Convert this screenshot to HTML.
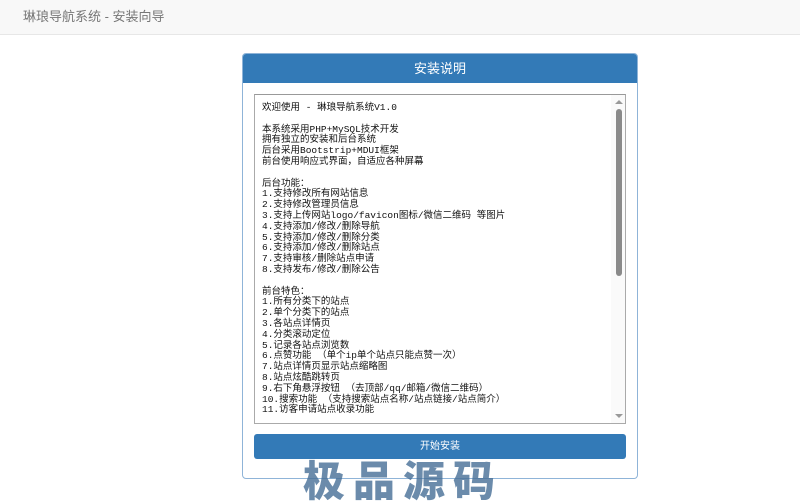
<!DOCTYPE html>
<html><head><meta charset="utf-8"><style>
html,body{margin:0;padding:0;width:800px;height:504px;overflow:hidden;background:#fff;font-family:"Liberation Sans","Noto Sans CJK SC",sans-serif;position:relative}
.nav{position:absolute;left:0;top:0;width:800px;height:34px;background:#f8f8f8;border-bottom:1px solid #e7e7e7}
.nav span{position:absolute;left:23px;top:8px;font-size:13px;color:#777;line-height:18px}
.panel{position:absolute;left:242px;top:53px;width:394px;height:424px;border:1px solid #8fb4d8;border-radius:4px;background:#fff}
.ph{height:29px;background:#337ab7;color:#fff;text-align:center;font-size:13px;line-height:29px;border-radius:3px 3px 0 0}
.ta{position:absolute;left:11px;top:40px;width:370px;height:328px;border:1px solid #aaa;border-top-color:#999;overflow:hidden;background:#fff}
.ta pre{margin:0;position:absolute;left:7px;top:8px;font-family:"Liberation Mono","Noto Sans CJK SC",monospace;font-size:9.5px;line-height:10.8px;color:#111;white-space:pre}
.ta pre div{height:10.8px;line-height:10.8px}
.sb{position:absolute;right:0;top:0;width:14px;height:100%;background:#fafafa}
.thumb{position:absolute;left:5px;top:14px;width:6px;height:167px;background:#8a8a8a;border-radius:3px}
.up{position:absolute;left:4px;top:5px;width:0;height:0;border-left:4px solid transparent;border-right:4px solid transparent;border-bottom:4px solid #999}
.dn{position:absolute;left:4px;bottom:5px;width:0;height:0;border-left:4px solid transparent;border-right:4px solid transparent;border-top:4px solid #999}
.btn{position:absolute;left:11px;top:380px;width:372px;height:25px;background:#337ab7;border-radius:3px;color:#fff;text-align:center;font-size:10px;line-height:25px}
.wm{position:absolute;left:303px;top:456px;font-size:42px;font-weight:900;color:rgba(70,110,150,0.8);letter-spacing:8px;font-family:"Noto Sans CJK SC",sans-serif;line-height:46px}
</style></head><body>
<div class="nav"><span>琳琅导航系统 - 安装向导</span></div>
<div class="panel">
<div class="ph">安装说明</div>
<div class="ta"><pre><div>欢迎使用 - 琳琅导航系统V1.0</div><div></div><div>本系统采用PHP+MySQL技术开发</div><div>拥有独立的安装和后台系统</div><div>后台采用Bootstrip+MDUI框架</div><div>前台使用响应式界面，自适应各种屏幕</div><div></div><div>后台功能：</div><div>1.支持修改所有网站信息</div><div>2.支持修改管理员信息</div><div>3.支持上传网站logo/favicon图标/微信二维码 等图片</div><div>4.支持添加/修改/删除导航</div><div>5.支持添加/修改/删除分类</div><div>6.支持添加/修改/删除站点</div><div>7.支持审核/删除站点申请</div><div>8.支持发布/修改/删除公告</div><div></div><div>前台特色：</div><div>1.所有分类下的站点</div><div>2.单个分类下的站点</div><div>3.各站点详情页</div><div>4.分类滚动定位</div><div>5.记录各站点浏览数</div><div>6.点赞功能 （单个ip单个站点只能点赞一次）</div><div>7.站点详情页显示站点缩略图</div><div>8.站点炫酷跳转页</div><div>9.右下角悬浮按钮 （去顶部/qq/邮箱/微信二维码）</div><div>10.搜索功能 （支持搜索站点名称/站点链接/站点简介）</div><div>11.访客申请站点收录功能</div></pre>
<div class="sb"><div class="up"></div><div class="thumb"></div><div class="dn"></div></div>
</div>
<div class="btn">开始安装</div>
</div>
<div class="wm">极品源码</div>
</body></html>
